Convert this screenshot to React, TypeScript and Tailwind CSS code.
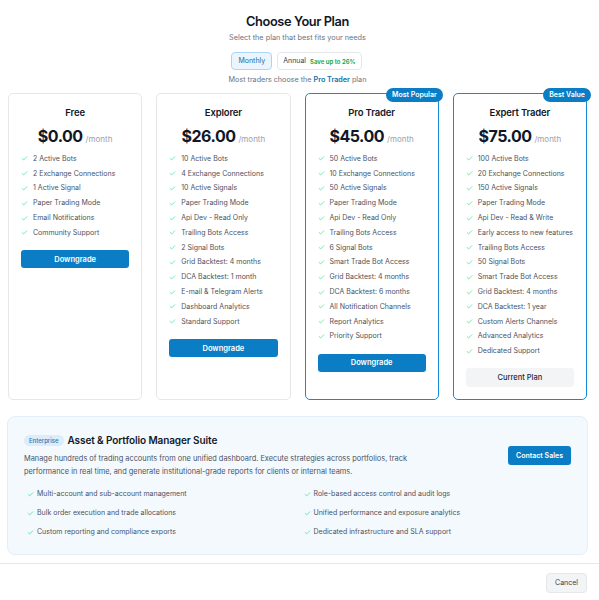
import { Check } from 'lucide-react';

interface Plan {
  name: string;
  price: string;
  features: string[];
  badge?: string;
  highlight?: boolean;
  current?: boolean;
}

const plans: Plan[] = [
  {
    name: 'Free',
    price: '$0.00',
    features: [
      '2 Active Bots',
      '2 Exchange Connections',
      '1 Active Signal',
      'Paper Trading Mode',
      'Email Notifications',
      'Community Support',
    ],
  },
  {
    name: 'Explorer',
    price: '$26.00',
    features: [
      '10 Active Bots',
      '4 Exchange Connections',
      '10 Active Signals',
      'Paper Trading Mode',
      'Api Dev - Read Only',
      'Trailing Bots Access',
      '2 Signal Bots',
      'Grid Backtest: 4 months',
      'DCA Backtest: 1 month',
      'E-mail & Telegram Alerts',
      'Dashboard Analytics',
      'Standard Support',
    ],
  },
  {
    name: 'Pro Trader',
    price: '$45.00',
    badge: 'Most Popular',
    highlight: true,
    features: [
      '50 Active Bots',
      '10 Exchange Connections',
      '50 Active Signals',
      'Paper Trading Mode',
      'Api Dev - Read Only',
      'Trailing Bots Access',
      '6 Signal Bots',
      'Smart Trade Bot Access',
      'Grid Backtest: 4 months',
      'DCA Backtest: 6 months',
      'All Notification Channels',
      'Report Analytics',
      'Priority Support',
    ],
  },
  {
    name: 'Expert Trader',
    price: '$75.00',
    badge: 'Best Value',
    highlight: true,
    current: true,
    features: [
      '100 Active Bots',
      '20 Exchange Connections',
      '150 Active Signals',
      'Paper Trading Mode',
      'Api Dev - Read & Write',
      'Early access to new features',
      'Trailing Bots Access',
      '50 Signal Bots',
      'Smart Trade Bot Access',
      'Grid Backtest: 4 months',
      'DCA Backtest: 1 year',
      'Custom Alerts Channels',
      'Advanced Analytics',
      'Dedicated Support',
    ],
  },
];

const enterpriseFeatures = [
  'Multi-account and sub-account management',
  'Role-based access control and audit logs',
  'Bulk order execution and trade allocations',
  'Unified performance and exposure analytics',
  'Custom reporting and compliance exports',
  'Dedicated infrastructure and SLA support',
];

function PlanCard({ plan }: { plan: Plan }) {
  return (
    <div
      className={`relative flex flex-col rounded-[5px] bg-white px-[12px] pt-[12px] pb-[12px] ${
        plan.highlight ? 'border-[1.5px] border-[#1589d3]' : 'border border-gray-200'
      }`}
    >
      {plan.badge && (
        <span className="absolute -top-[6px] -right-[5px] rounded-full bg-[#0b7dc4] px-[6px] text-[7px] font-semibold leading-[14px] text-white">
          {plan.badge}
        </span>
      )}
      <h3 className="text-center text-[9.5px] font-semibold leading-[14px] tracking-[-0.15px] text-gray-900">{plan.name}</h3>
      <div className="mt-[5px] flex items-baseline justify-center gap-[3px]">
        <span className="text-[16px] font-bold leading-[22px] tracking-[-0.5px] text-gray-900">{plan.price}</span>
        <span className="text-[8px] text-gray-400">/month</span>
      </div>

      {/* Features */}
      <ul className="mt-[4.6px]">
        {plan.features.map((f) => (
          <li key={f} className="flex h-[14.8px] items-center gap-[5px] text-[7px] text-[#4b5260]">
            <Check className="h-[7px] w-[7px] shrink-0 text-green-400" strokeWidth={2} />
            <span className="whitespace-nowrap">{f}</span>
          </li>
        ))}
      </ul>

      {plan.current ? (
        <button className="mt-[9.5px] h-[19px] w-full rounded-[3px] bg-gray-100 text-[7.5px] font-medium text-gray-800">
          Current Plan
        </button>
      ) : (
        <button className="mt-[10px] h-[18px] w-full rounded-[3px] bg-[#0b7dc4] text-[7.5px] font-semibold text-white">
          Downgrade
        </button>
      )}
    </div>
  );
}

export default function App() {
  return (
    <div className="min-h-screen bg-white font-['Inter',sans-serif] text-gray-800">
      <div className="pl-[7px] pr-[11px] pt-[13px]">
        {/* Header */}
        <div className="flex flex-col items-center">
          <h1 className="text-[12.8px] font-semibold leading-[18px] tracking-[-0.4px] text-gray-900">Choose Your Plan</h1>
          <p className="mt-[1px] text-[7.3px] leading-[12px] text-gray-500">Select the plan that best fits your needs</p>
          <div className="mt-[8px] flex gap-[5px] pr-[2px]">
            <button className="h-[18px] rounded-[4px] border border-[#a9d6f5] bg-[#eaf5fd] px-[6px] text-[7px] text-[#1c6ea6]">
              Monthly
            </button>
            <button className="flex h-[18px] items-center gap-[4px] rounded-[4px] border border-gray-200 bg-white px-[5px] text-[7px] text-gray-700">
              Annual
              <span className="text-[6px] font-semibold text-green-600">Save up to 26%</span>
            </button>
          </div>
          <p className="mt-[4px] text-[7.2px] leading-[12px] text-gray-500">
            Most traders choose the <span className="font-semibold text-[#0b6fae]">Pro Trader</span> plan
          </p>
        </div>

        {/* Plans */}
        <div className="mt-[7px] grid grid-cols-4 gap-[14px] px-[1px]">
          {plans.map((p) => (
            <PlanCard key={p.name} plan={p} />
          ))}
        </div>

        {/* Enterprise */}
        <div className="mt-[16px] rounded-[8px] border border-[#e3eef9] bg-[#f4f9fe] px-[16px] pt-[16px] pb-[12px]">
          <div className="flex items-center justify-between">
            <div>
              <div className="flex items-center gap-[4px]">
                <span className="rounded-full bg-[#dcecfa] px-[5px] text-[6px] font-medium leading-[11px] text-[#2a78b6]">
                  Enterprise
                </span>
                <h2 className="text-[10px] font-semibold leading-[15px] tracking-[-0.1px] text-gray-900">
                  Asset &amp; Portfolio Manager Suite
                </h2>
              </div>
              <p className="mt-[4px] max-w-[400px] text-[7.4px] leading-[13px] text-[#4b5260]">
                Manage hundreds of trading accounts from one unified dashboard. Execute strategies across portfolios, track
                performance in real time, and generate institutional-grade reports for clients or internal teams.
              </p>
            </div>
            <button className="h-[19px] rounded-[3px] bg-[#0b7dc4] px-[8px] text-[7px] font-semibold text-white">
              Contact Sales
            </button>
          </div>
          <div className="mt-[6.5px] grid grid-cols-2 gap-x-[12px] px-[3px]">
            {enterpriseFeatures.map((f) => (
              <div key={f} className="flex h-[19px] items-center gap-[3px] text-[7px] text-[#4b5260]">
                <Check className="h-[7px] w-[7px] shrink-0 text-green-400" strokeWidth={2} />
                <span>{f}</span>
              </div>
            ))}
          </div>
        </div>
      </div>

      {/* Footer */}
      <div className="mt-[8px] flex justify-end border-t border-gray-200 pt-[9px] pr-[12px]">
        <button className="h-[20px] rounded-[4px] border border-gray-200 bg-gray-100 px-[8px] text-[7px] text-gray-700">
          Cancel
        </button>
      </div>
    </div>
  );
}
